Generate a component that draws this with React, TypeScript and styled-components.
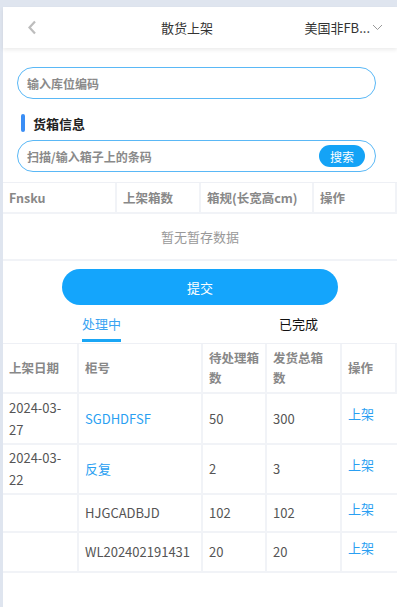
import styled, { createGlobalStyle } from 'styled-components';

const GlobalStyle = createGlobalStyle`
  body {
    margin: 0;
    background: #dfe5ef;
    font-family: 'Noto Sans CJK SC', 'Noto Sans', sans-serif;
  }
`;

const Page = styled.div`
  margin: 7px 0 0 3px;
  min-height: 600px;
  background: #fff;
`;

const NavBar = styled.div`
  display: flex;
  align-items: center;
  height: 41px;
  padding: 0 14px 0 24px;
  box-shadow: 0 2px 4px rgba(0, 0, 0, 0.08);
  position: relative;
`;

const Back = styled.div`
  width: 60px;
  display: flex;
  align-items: center;
`;

const Title = styled.div`
  flex: 1;
  text-align: center;
  font-size: 13px;
  color: #333;
  padding-right: 10px;
`;

const Picker = styled.div`
  width: 86px;
  display: flex;
  align-items: center;
  justify-content: flex-end;
  gap: 2px;
  font-size: 13px;
  color: #333;
`;

const Content = styled.div`
  padding: 19px 21px 0 14px;
`;

const Field = styled.div<{ $top?: number }>`
  display: flex;
  align-items: center;
  height: 32px;
  border: 1px solid #5ab8f6;
  border-radius: 17px;
  padding: 0 10px 0 9px;
  box-sizing: border-box;
  margin-top: ${(p) => p.$top ?? 0}px;
`;

const Placeholder = styled.span`
  flex: 1;
  font-size: 12px;
  font-weight: 600;
  color: #8a8a8a;
`;

const SearchButton = styled.button`
  border: none;
  background: #14a3f6;
  color: #fff;
  font-family: inherit;
  font-size: 12px;
  height: 22px;
  width: 46px;
  border-radius: 11px;
  padding: 0;
`;

const SectionTitle = styled.div`
  display: flex;
  align-items: center;
  gap: 8px;
  margin: 14px 0 0 4px;
  font-size: 13px;
  font-weight: 700;
  color: #222;
  height: 20px;

  &::before {
    content: '';
    width: 4px;
    height: 18px;
    border-radius: 2px;
    background: #3a8ef5;
  }
`;

const Grid = styled.div<{ $cols: string; $top?: number }>`
  display: grid;
  grid-template-columns: ${(p) => p.$cols};
  margin-top: ${(p) => p.$top ?? 0}px;
  border-top: ${(p) => (p.$top ? '1px solid #eef0f5' : 'none')};
`;

const HeadCell = styled.div<{ $h: number }>`
  min-height: ${(p) => p.$h}px;
  display: flex;
  align-items: center;
  padding: 0 6px;
  font-size: 12.5px;
  font-weight: 700;
  color: #888;
  line-height: 20px;
  border-right: 2px solid #f1f3f7;
  border-bottom: 2px solid #f1f3f7;
  box-sizing: border-box;
  &:last-child {
    border-right: none;
  }
`;

const Cell = styled.div<{ $h: number; $last?: boolean }>`
  min-height: ${(p) => p.$h}px;
  display: flex;
  align-items: center;
  padding: 0 6px;
  font-size: 13px;
  color: #555;
  line-height: 22px;
  border-right: ${(p) => (p.$last ? 'none' : '2px solid #f1f3f7')};
  border-bottom: 2px solid #f1f3f7;
  box-sizing: border-box;
`;

const Empty = styled.div`
  grid-column: 1 / -1;
  height: 45px;
  display: flex;
  align-items: center;
  justify-content: center;
  font-size: 13px;
  color: #999;
  border-bottom: 2px solid #f1f3f7;
`;

const Link = styled.span<{ $raise?: boolean }>`
  color: #2a9ff2;
  margin-bottom: ${(p) => (p.$raise ? 9 : 0)}px;
`;

const Submit = styled.button`
  display: block;
  margin: 8px auto 0;
  width: 276px;
  height: 36px;
  border: none;
  border-radius: 18px;
  background: #14a5fc;
  color: #fff;
  font-family: inherit;
  font-size: 13px;
`;

const Tabs = styled.div`
  display: flex;
  margin-top: 9px;
`;

const Tab = styled.div`
  flex: 1;
  display: flex;
  justify-content: center;
`;

const TabLabel = styled.span<{ $active?: boolean }>`
  font-size: 13px;
  line-height: 20px;
  padding-bottom: 5px;
  color: ${(p) => (p.$active ? '#3aa3f2' : '#111')};
  border-bottom: 3px solid ${(p) => (p.$active ? '#1aa6f5' : 'transparent')};
`;

const Chevron = () => (
  <svg width="10" height="15" viewBox="0 0 10 15">
    <path d="M8 1.5 L2.5 7.5 L8 13.5" fill="none" stroke="#bdbdbd" strokeWidth="2.2" />
  </svg>
);

const Caret = () => (
  <svg width="11" height="7" viewBox="0 0 11 7">
    <path d="M1 1 L5.5 5.5 L10 1" fill="none" stroke="#999" strokeWidth="1" />
  </svg>
);

const rows = [
  { date: '2024-03-27', no: 'SGDHDFSF', link: true, pending: '50', total: '300', h: 51 },
  { date: '2024-03-22', no: '反复', link: true, pending: '2', total: '3', h: 50 },
  { date: '', no: 'HJGCADBJD', link: false, pending: '102', total: '102', h: 38 },
  { date: '', no: 'WL202402191431', link: false, pending: '20', total: '20', h: 40 },
];

const App = () => {
  return (
    <Page>
      <GlobalStyle />
      <NavBar>
        <Back>
          <Chevron />
        </Back>
        <Title>散货上架</Title>
        <Picker>
          美国非FB...
          <Caret />
        </Picker>
      </NavBar>

      <Content>
        <Field>
          <Placeholder>输入库位编码</Placeholder>
        </Field>
        <SectionTitle>货箱信息</SectionTitle>
        <Field $top={7}>
          <Placeholder>扫描/输入箱子上的条码</Placeholder>
          <SearchButton>搜索</SearchButton>
        </Field>
      </Content>

      <Grid $cols="114px 84px 113px 1fr" $top={10}>
        <HeadCell $h={31}>Fnsku</HeadCell>
        <HeadCell $h={31}>上架箱数</HeadCell>
        <HeadCell $h={31}>箱规(长宽高cm)</HeadCell>
        <HeadCell $h={31}>操作</HeadCell>
        <Empty>暂无暂存数据</Empty>
      </Grid>

      <Submit>提交</Submit>

      <Tabs>
        <Tab>
          <TabLabel $active>处理中</TabLabel>
        </Tab>
        <Tab>
          <TabLabel>已完成</TabLabel>
        </Tab>
      </Tabs>

      <Grid $cols="76px 124px 64px 75px 1fr" $top={1}>
        <HeadCell $h={50}>上架日期</HeadCell>
        <HeadCell $h={50}>柜号</HeadCell>
        <HeadCell $h={50}>待处理箱数</HeadCell>
        <HeadCell $h={50}>发货总箱数</HeadCell>
        <HeadCell $h={50}>操作</HeadCell>
        {rows.map((r) => (
          <>
            <Cell $h={r.h}>{r.date}</Cell>
            <Cell $h={r.h}>{r.link ? <Link>{r.no}</Link> : r.no}</Cell>
            <Cell $h={r.h}>{r.pending}</Cell>
            <Cell $h={r.h}>{r.total}</Cell>
            <Cell $h={r.h} $last>
              <Link $raise>上架</Link>
            </Cell>
          </>
        ))}
      </Grid>
    </Page>
  );
};

export default App;
